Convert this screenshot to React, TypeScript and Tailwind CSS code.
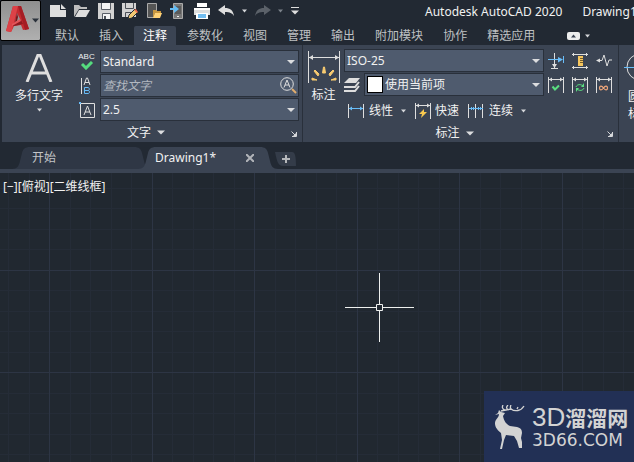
import type { ReactNode } from "react";

const UI = "font-['Noto_Sans','Noto_Sans_CJK_SC',sans-serif]";

const gridSteps = Array.from({ length: 160 }, (_, i) => i);

function Caret({ small = false, dim = false }: { small?: boolean; dim?: boolean }) {
  return small ? (
    <svg width="5" height="4" viewBox="0 0 5 4" className="shrink-0" aria-hidden="true">
      <path d="M0 .5h5L2.500 3.500z" fill={dim ? "#7d838b" : "#d5d7da"} />
    </svg>
  ) : (
    <svg width="8" height="5" viewBox="0 0 8 5" className="shrink-0" aria-hidden="true">
      <path d="M0 .5h8L4 4.500z" fill="#dcdddf" />
    </svg>
  );
}

function Icon({ children, w = 16, h = 16 }: { children: ReactNode; w?: number; h?: number }) {
  return (
    <svg width={w} height={h} viewBox={`0 0 ${w} ${h}`} fill="none" className="shrink-0" aria-hidden="true">
      {children}
    </svg>
  );
}

function Combo({ label, value, swatch = false }: { label: string; value: string; swatch?: boolean }) {
  return (
    <div className="relative flex h-[23px] min-w-0 flex-1 items-center border border-[#29303b] bg-[#4f5b6e]">
      {swatch && <span className="ml-[2px] h-[17px] w-[16px] shrink-0 border border-black bg-white" />}
      <select
        aria-label={label}
        defaultValue={value}
        className="h-full w-full min-w-0 appearance-none bg-transparent pl-[2px] text-[12px] text-[#f1f1f1] outline-none"
      >
        <option>{value}</option>
      </select>
      <span className="pointer-events-none absolute top-1/2 right-[3px] -translate-y-1/2">
        <Caret />
      </span>
    </div>
  );
}

function Launcher({ label }: { label: string }) {
  return (
    <button type="button" aria-label={label} className="absolute right-[5px] bottom-[5px]">
      <Icon w={6} h={6}>
        <path d="M.5 .5l4 4M5.500 1v4.500H1" stroke="#d5d7da" />
        <path d="M5 2v3H2z" fill="#d5d7da" />
      </Icon>
    </button>
  );
}

function PanelTitle({ title }: { title: string }) {
  return (
    <div className="relative flex flex-1 items-center justify-center pt-[2px] pr-[12px]">
      <button type="button" className="flex items-center gap-[6px]">
        {title}
        <Caret />
      </button>
      <Launcher label={`${title}设置`} />
    </div>
  );
}

function AppLogo() {
  return (
    <Icon w={26} h={28}>
      <path d="M8 1h8l8 23-6 1-2-5-7 1-3 6-5-1z" fill="#c32a30" />
      <path d="M8 1h5L7 25l-1 2-5-1z" fill="#dc4247" />
      <path d="M13 1h3l8 23-4 1z" fill="#a51d24" />
      <path d="M12 8l4 8-6 1z" fill="#979797" />
      <path d="M10 17l2-9 1 4-1 4z" fill="#7a1419" />
      <path d="M7 20l9-5 2 4-9 2z" fill="#8e1a20" />
      <path d="M7 19l8-5 1 2-9 5z" fill="#e4555a" />
    </Icon>
  );
}

const light = "#dedede";

const quick = [
  {
    name: "新建",
    icon: (
      <>
        <path d="M0 2h10v5h6v7H0z" fill={light} />
        <path d="M11 1l5 5h-5z" fill={light} />
      </>
    ),
  },
  {
    name: "打开",
    icon: (
      <>
        <path d="M0 14V2h5l2 2h6v2H5z" fill="#bdbdbd" />
        <path d="M5 7h11l-4 7H1z" fill={light} />
      </>
    ),
  },
  {
    name: "保存",
    icon: (
      <>
        <path d="M0 0h16v16H0z" fill="#d2d2d2" />
        <path d="M4 0h8v6H4zM5 11h7v5H5z" fill="#f4f4f4" />
        <path d="M3.500 0v6.500h9V0M4.500 16v-5.500h8V16" stroke="#5a5f67" />
        <path d="M6 13h2v3H6z" fill="#4a4f57" />
      </>
    ),
  },
  {
    name: "另存为",
    icon: (
      <>
        <path d="M0 0h14v14H0z" fill="#d2d2d2" />
        <path d="M3.500 0v5.500h8V0M3.500 14V9.500h6" stroke="#4a4f57" />
        <path d="M7 12l6-6 3 3-6 6-4 1z" fill="#f1c872" stroke="#222933" />
        <path d="M12 7l2-1 2 3-1 1z" fill="#ef6848" />
      </>
    ),
  },
  {
    name: "从移动设备打开",
    icon: (
      <>
        <path d="M1.500 .5h9v14h-9z" fill="#555" stroke="#aaa" />
        <path d="M7 15V7h3l1 1h4v2H9z" fill="#c7963f" />
        <path d="M9 10h7l-2 5H7z" fill="#ffd277" />
      </>
    ),
  },
  {
    name: "保存到移动设备",
    icon: (
      <>
        <path d="M3.500 .5h9v15h-9z" fill="#777" stroke="#aaa" />
        <path d="M5 3h6v8H5z" fill="#5a5a5a" />
        <path d="M0 5h4V2l5 4-5 4V7H0z" fill="#64bdf5" />
        <path d="M7 13.500h2" stroke="#eee" />
      </>
    ),
  },
  {
    name: "打印",
    icon: (
      <>
        <path d="M3 0h10v4H3z" fill="#fff" />
        <path d="M0 5h16v7H0z" fill={light} />
        <path d="M0 5h16v2H0z" fill="#fff" />
        <path d="M2 10h12v6H2z" fill="#fff" />
        <path d="M4 11h8v4H4z" fill="#72bdf0" />
      </>
    ),
  },
];

const menus = ["默认", "插入", "注释", "参数化", "视图", "管理", "输出", "附加模块", "协作", "精选应用"];

const dimTools = [
  [
    {
      name: "标注间距",
      icon: (
        <>
          <path d="M6.500 0v15M3 15.500h7" stroke={light} />
          <path d="M4 11h5l-2.500 4z" fill={light} />
          <path d="M0 6.500h14M15.500 3v7" stroke="#69bdf8" />
          <path d="M10 4l5 2.500-5 3z" fill="#69bdf8" />
        </>
      ),
    },
    {
      name: "调整间距",
      icon: (
        <>
          <path d="M0 1.500h16M0 14.500h16M1.500 0v3M14.500 0v3M1.500 13v3M14.500 13v3" stroke={light} />
          <path d="M6 3h5v10H6z" fill="#f6c65e" />
          <path d="M8 5.500h3M8 7.500h3M8 9.500h3" stroke="#775d2b" />
        </>
      ),
    },
    {
      name: "折弯标注",
      icon: (
        <>
          <path d="M1 7.500h5L8 2l3 11 2-6h3" stroke={light} />
          <path d="M0 7.500l4-2v4z" fill={light} />
        </>
      ),
    },
  ],
  [
    {
      name: "检验",
      icon: (
        <>
          <path d="M.5 0v16M15.500 0v16M1 2.500h14" stroke={light} />
          <path d="M1 2.500l3-2v4zM15 2.500l-3-2v4z" fill={light} />
          <path d="M4.500 9.500l2.500 3 4-4" stroke="#5ade80" strokeWidth="2" />
        </>
      ),
    },
    {
      name: "更新",
      icon: (
        <>
          <path d="M.5 0v16M15.500 0v16M1 2.500h14" stroke={light} />
          <path d="M1 2.500l3-2v4zM15 2.500l-3-2v4z" fill={light} />
          <path d="M4 10c1-3 5-3 7-1M12 11c-1 3-5 3-7 1" stroke="#5ade80" />
          <path d="M12 6v4H9zM4 15v-4h3z" fill="#5ade80" />
        </>
      ),
    },
    {
      name: "重新关联",
      icon: (
        <>
          <path d="M.5 0v16M15.500 0v16M1 2.500h14" stroke={light} />
          <path d="M1 2.500l3-2v4zM15 2.500l-3-2v4z" fill={light} />
          <path d="M7.500 11c-2-3-4-2-4 0s2 3 4 0 4-2 4 0-2 3-4 0z" stroke="#f0a67a" strokeWidth="1.2" />
        </>
      ),
    },
  ],
];

function TitleBar() {
  return (
    <header className="flex bg-[#222933]">
      <button
        type="button"
        aria-label="应用程序菜单"
        className="flex h-[41px] w-[41px] shrink-0 items-start gap-px rounded-xs border border-black bg-linear-to-b from-[#8f8f8f] to-[#b0b0b0] pt-[4px] pl-[4px]"
      >
        <AppLogo />
        <span className="pt-[13px]">
          <Icon w={8} h={5}>
            <path d="M0 .5h7L3.500 4.500z" fill="#2b323c" />
          </Icon>
        </span>
      </button>
      <div className="min-w-0 flex-1">
        <div className="flex h-[26px] items-center overflow-hidden pb-[4px] pl-[9px]">
          <div className="flex shrink-0 items-center gap-[8px]">
            {quick.map((q) => (
              <button key={q.name} type="button" aria-label={q.name}>
                <Icon>{q.icon}</Icon>
              </button>
            ))}
            <button type="button" aria-label="放弃" className="flex items-center gap-[8px]">
              <Icon>
                <path d="M0 7l7-5v3c5 0 8 2 9 8-2-3-4-4-9-4v3z" fill={light} />
              </Icon>
              <Caret small />
            </button>
            <button type="button" aria-label="重做" className="flex items-center gap-[7px]">
              <Icon>
                <path d="M16 7L9 2v3C4 5 1 7 0 13c2-3 4-4 9-4v3z" fill="#5b6169" />
              </Icon>
              <Caret small dim />
            </button>
            <button type="button" aria-label="自定义快速访问工具栏">
              <Icon w={8} h={8}>
                <path d="M0 3.500h8L4 7.500z" fill={light} />
                <path d="M0 .5h8" stroke={light} />
              </Icon>
            </button>
          </div>
          <h1 className="ml-[126px] flex min-w-0 gap-[20px] pt-[2px] text-[12px] whitespace-nowrap text-[#f1f1f1]">
            <span>Autodesk AutoCAD 2020</span>
            <span>Drawing1.dwg</span>
          </h1>
        </div>
        <nav className="flex h-[19px] items-stretch gap-[2px] overflow-hidden pl-[5px]">
          {menus.map((m) => (
            <button
              key={m}
              type="button"
              className={`shrink-0 rounded-t-xs px-[9px] leading-[18px] ${m === "注释" ? "bg-[#3b4453] text-white" : "text-[#bfc1c3]"}`}
            >
              {m}
            </button>
          ))}
          <button type="button" aria-label="最小化功能区" className="ml-[21px] flex shrink-0 items-center gap-[5px]">
            <Icon w={13} h={8}>
              <rect width="13" height="8" rx="2" fill="#eceded" />
              <path d="M4 5.500h5L6.500 2.500z" fill="#3b4453" />
            </Icon>
            <Caret small />
          </button>
        </nav>
      </div>
    </header>
  );
}

function TextPanel() {
  return (
    <section className="flex w-[301px] shrink-0 flex-col border-r border-[#29303b]">
      <div className="flex pt-[5px] pr-[3px]">
        <button type="button" className="flex w-[74px] shrink-0 flex-col items-center pt-[4px]">
          <Icon w={28} h={28}>
            <path d="M2 28L13 1h2l11 27M6 19h16" stroke={light} strokeWidth="3" />
          </Icon>
          <span className="pt-[2px] leading-[24px]">多行文字</span>
          <Caret small />
        </button>
        <div className="flex min-w-0 flex-1 flex-col gap-px">
          <div className="flex items-center">
            <button type="button" aria-label="拼写检查" className="flex w-[24px] shrink-0 flex-col items-center pr-[3px]">
              <span className="font-['Liberation_Sans',sans-serif] text-[8px] leading-[8px]">ABC</span>
              <Icon w={16} h={9}>
                <path d="M3 3l4 4 6-6" stroke="#55dc7e" strokeWidth="3" />
              </Icon>
            </button>
            <Combo label="文字样式" value="Standard" />
          </div>
          <div className="flex items-center">
            <button type="button" aria-label="对齐文字" className="w-[24px] shrink-0 pl-[5px]">
              <Icon w={16} h={18}>
                <path d="M.5 1v16" stroke={light} />
                <path d="M3 8l2.500-7h1L9 8M4 5.500h4" stroke={light} />
                <path d="M3.500 10.500v6H7c2 0 2-3 0-3H4h3c2 0 1.500-3 0-3z" stroke="#69bdf8" />
              </Icon>
            </button>
            <label className="flex h-[23px] min-w-0 flex-1 items-center border border-[#29303b] bg-[#4f5b6e] pr-px">
              <input
                aria-label="查找文字"
                placeholder="查找文字"
                className="h-full w-full min-w-0 bg-transparent pl-[2px] text-[12px] italic outline-none placeholder:text-[#b3b8c0]"
              />
              <Icon w={17} h={17}>
                <circle cx="7" cy="7" r="6.300" stroke="#dedede" />
                <path d="M4 10.500l3-7.500 3 7.500M5 8h4" stroke="#dedede" />
                <path d="M12 12l4 4" stroke="#e3ae6d" strokeWidth="2" />
              </Icon>
            </label>
          </div>
          <div className="flex items-center">
            <button type="button" aria-label="文字高度" className="w-[24px] shrink-0 pl-[3px]">
              <Icon w={16} h={16}>
                <path d="M1.500 1.500h14v14h-14z" stroke={light} />
                <path d="M5 13l3.500-9L12 13M6 10h5" stroke={light} />
                <path d="M0 0h2v2H0z" fill="#69bdf8" />
              </Icon>
            </button>
            <Combo label="高度" value="2.5" />
          </div>
        </div>
      </div>
      <PanelTitle title="文字" />
    </section>
  );
}

function DimensionPanel() {
  return (
    <section className="flex w-[316px] shrink-0 flex-col border-r border-[#29303b]">
      <div className="flex h-[77px] pt-[4px]">
        <button type="button" className="flex w-[41px] shrink-0 flex-col items-center gap-[2px] pt-[2px]">
          <Icon w={32} h={32}>
            <path d="M.5 0v32M31.500 0v32M1 6.500h30" stroke={light} />
            <path d="M1 6.500L5 4v5zM31 6.500L27 4v5z" fill={light} />
            <path
              d="M14.500 22l1-6h1l1 6zM11 23l-4-4-1 1 4 5zM21 23l4-4 1 1-4 5zM9 29l-5-2v2zM23 29l5-2v2z"
              fill="#f8cb70"
              stroke="#f8cb70"
            />
          </Icon>
          <span className="leading-[20px]">标注</span>
        </button>
        <div className="flex min-w-0 flex-1 flex-col pr-[6px]">
          <div className="flex items-center gap-[4px]">
            <Combo label="标注样式" value="ISO-25" />
            <div className="flex gap-[8px]">
              {dimTools[0].map((t) => (
                <button key={t.name} type="button" aria-label={t.name}>
                  <Icon>{t.icon}</Icon>
                </button>
              ))}
            </div>
          </div>
          <div className="mt-px flex items-center gap-[4px]">
            <button type="button" aria-label="标注图层" className="shrink-0">
              <Icon>
                <path d="M5 1h11l-4 5H0z" fill={light} />
                <path d="M0 10h11l4-5M0 14h11l4-5" stroke={light} strokeWidth="2" />
              </Icon>
            </button>
            <Combo label="图层" value="使用当前项" swatch />
            <div className="flex gap-[8px]">
              {dimTools[1].map((t) => (
                <button key={t.name} type="button" aria-label={t.name}>
                  <Icon>{t.icon}</Icon>
                </button>
              ))}
            </div>
          </div>
          <div className="flex h-[30px] shrink-0 items-center gap-[9px] pl-[4px]">
            <button type="button" className="flex items-center gap-[5px]">
              <Icon>
                <path d="M.5 1v14M15.500 1v14" stroke={light} />
                <path d="M1 5.500h14" stroke="#69bdf8" />
                <path d="M1 5.500l3-2v4zM15 5.500l-3-2v4z" fill="#69bdf8" />
              </Icon>
              线性
              <span className="pl-[3px]">
                <Caret small />
              </span>
            </button>
            <button type="button" className="flex items-center gap-[4px]">
              <Icon>
                <path d="M.5 0v16M15.500 0v16M1 2.500h14" stroke={light} />
                <path d="M1 2.500l3-2v4zM15 2.500l-3-2v4z" fill={light} />
                <path d="M9 6l-5 5h3l-1 4 6-6H9z" fill="#f8c94f" />
              </Icon>
              快速
            </button>
            <button type="button" className="flex items-center gap-[5px]">
              <Icon>
                <path d="M.5 1v14M7.500 1v14M14.500 1v14" stroke={light} />
                <path d="M1 5.500h14M3.500 4v3M5.500 4v3M10.500 4v3M12.500 4v3" stroke="#69bdf8" />
              </Icon>
              连续
              <span className="pl-[3px]">
                <Caret small />
              </span>
            </button>
          </div>
        </div>
      </div>
      <PanelTitle title="标注" />
    </section>
  );
}

function CenterlinePanel() {
  return (
    <section className="min-w-0 flex-1 overflow-hidden">
      <button type="button" className="flex w-[42px] flex-col items-center pt-[6px] leading-[17px]">
        <span className="pb-[5px]">
          <Icon w={32} h={32}>
            <circle cx="16" cy="16" r="13" stroke={light} />
            <path d="M0 16.500h32M16.500 0v32" stroke="#69bdf8" />
          </Icon>
        </span>
        <span>圆心</span>
        <span>标记</span>
      </button>
    </section>
  );
}

function TabShape({ fill }: { fill: string }) {
  return (
    <svg
      viewBox="0 0 140 22"
      preserveAspectRatio="none"
      className="absolute inset-0 h-full w-full"
      aria-hidden="true"
    >
      <path d="M0 22c5 0 7-3 8-8l2-8c1-4 3-6 8-6h104c5 0 7 2 8 6l2 8c1 5 3 8 8 8z" fill={fill} />
    </svg>
  );
}

function FileTabs() {
  return (
    <div className="flex h-[31px] items-end overflow-hidden border-b-4 border-[#3b4453] bg-[#222933] pl-[12px]">
      <button type="button" className="relative h-[22px] w-[140px] shrink-0 pl-[20px] text-left text-[#c3c5c8]">
        <TabShape fill="#2f3745" />
        <span className="relative">开始</span>
      </button>
      <div className="relative -ml-[14px] flex h-[22px] w-[140px] shrink-0 items-center justify-between pr-[24px] pl-[17px]">
        <TabShape fill="#3b4453" />
        <button type="button" className="relative text-[12px] text-[#f1f1f1]">
          Drawing1*
        </button>
        <button type="button" aria-label="关闭" className="relative">
          <Icon w={8} h={8}>
            <path d="M0 0l8 8M8 0L0 8" stroke="#b1b4b9" strokeWidth="2" />
          </Icon>
        </button>
      </div>
      <button type="button" aria-label="新图形" className="-ml-[3px] self-center pt-[6px]">
        <Icon w={22} h={14}>
          <path d="M0 0h17c3 0 4 4 4 14H8C3 14 2 9 0 0z" fill="#343c49" />
          <path d="M11 3v8M7 7h8" stroke="#b5b7ba" strokeWidth="2" />
        </Icon>
      </button>
    </div>
  );
}

function Watermark() {
  return (
    <div className="absolute right-0 bottom-0 flex h-[71px] w-[150px] items-center gap-[4px] bg-[#223055] pl-[10px] text-[#d3d3d3]">
      <svg width="34" height="44" viewBox="0 0 34 44" className="shrink-0" aria-hidden="true">
        <path
          d="M1 10l3-2 1-3 2 2 4 1-2 3c1 5 3 8 7 10l7 1c4 1 5 3 5 6l-1 5 1 4v6h-3l-2-7-3-5-8-1-2 5-2 9H6l2-9-1-7c-5-4-6-7-6-10 0-4 4-5 4-9z"
          fill="#d3d3d3"
        />
        <path
          d="M7 6c4-1 6-1 10-2 4 3 10 2 13-3M11 5C8 4 8 2 9 0M15 5c-3-1-3-3-1-5M19 5c-3-1-3-3-2-5M23 4l1-2"
          fill="none"
          stroke="#d3d3d3"
          strokeWidth="1.3"
        />
      </svg>
      <div className="flex flex-col whitespace-nowrap">
        <span className="flex items-center leading-[26px]">
          <span className="font-['Liberation_Sans',sans-serif] text-[26px]">3D</span>
          <span className="font-['Noto_Sans_CJK_SC',sans-serif] text-[21px] font-bold">溜溜网</span>
        </span>
        <span className="font-['DejaVu_Sans',sans-serif] text-[17px] leading-[20px]">3D66.COM</span>
      </div>
    </div>
  );
}

function Canvas() {
  return (
    <main className="relative flex-1 overflow-hidden bg-[#212830]">
      <svg className="absolute inset-0 h-full w-full" shapeRendering="crispEdges" aria-hidden="true">
        {[false, true].map((major) =>
          gridSteps
            .filter((i) => (i % 5 === 0) === major)
            .map((i) => {
              const x = Math.floor(49.5 + (i - 5) * 20.5);
              const y = Math.floor(97 + (i - 5) * 20.5);
              const fill = major ? "#2d3544" : "#252c37";
              return (
                <g key={i} fill={fill}>
                  <rect x={x} y="0" width="1" height="100%" />
                  <rect x="0" y={y} width="100%" height="1" />
                </g>
              );
            }),
        )}
      </svg>
      <p className="relative px-[3px] pt-[4px] leading-[20px] text-[#f1f1f1]">[−][俯视][二维线框]</p>
      <svg
        width="69"
        height="69"
        viewBox="0 0 69 69"
        className="absolute top-[100px] left-[345px]"
        fill="none"
        stroke="#eef0ee"
        aria-hidden="true"
      >
        <path d="M34.500 0v31M34.500 38v31M0 34.500h31M38 34.500h31M31.500 31.500h6v6h-6z" />
      </svg>
      <Watermark />
    </main>
  );
}

export default function App() {
  return (
    <div className={`flex min-h-screen flex-col overflow-hidden bg-[#222933] text-[12px] leading-[18px] text-[#f1f1f1] ${UI}`}>
      <TitleBar />
      <div className="flex h-[97px] pl-[2px]">
        <div className="flex min-w-0 flex-1 overflow-hidden bg-[#3b4453]">
          <TextPanel />
          <DimensionPanel />
          <CenterlinePanel />
        </div>
      </div>
      <FileTabs />
      <Canvas />
    </div>
  );
}
